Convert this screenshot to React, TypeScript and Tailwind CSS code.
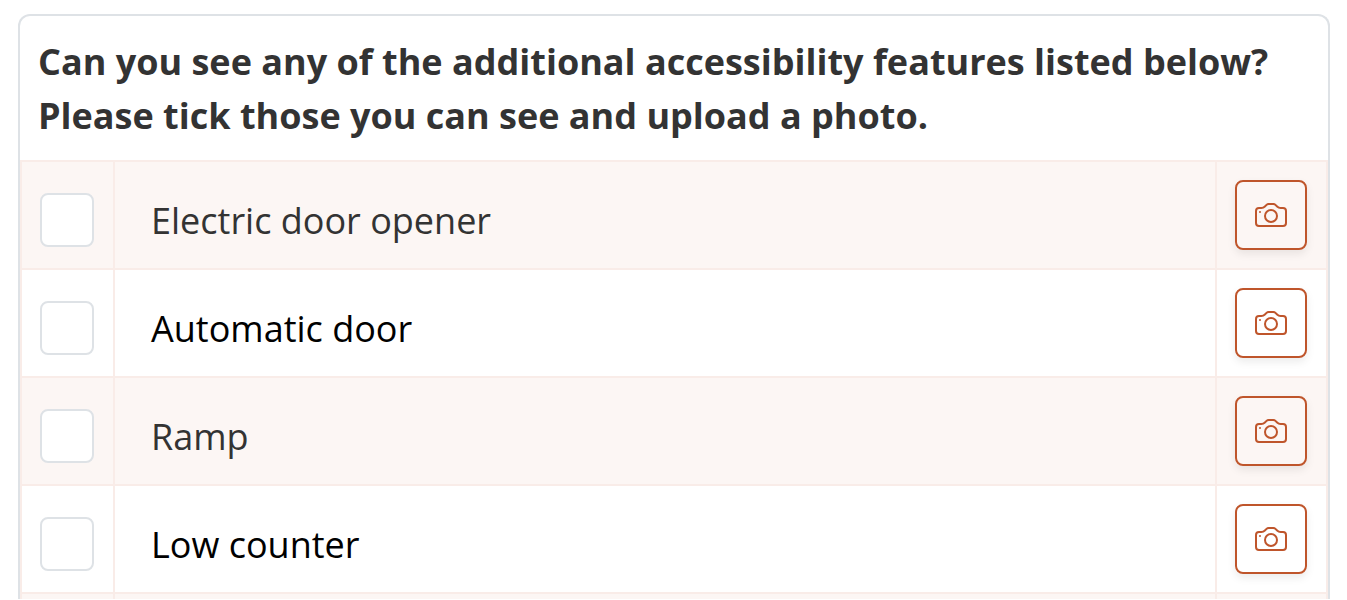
import { BsCamera } from "react-icons/bs";

const features = [
  { id: "electric-door-opener", label: "Electric door opener" },
  { id: "automatic-door", label: "Automatic door" },
  { id: "ramp", label: "Ramp" },
  { id: "low-counter", label: "Low counter" },
];

function FeatureRow({ id, label }: { id: string; label: string }) {
  return (
    <tr className="text-black odd:bg-[#fcf6f4] odd:text-[#333333]">
      <td className="w-[93px] border-2 border-[#f9ece8] px-[18px] pt-[31px] pb-5 align-top">
        <input
          id={id}
          type="checkbox"
          className="block size-[54px] appearance-none rounded-lg border-2 border-[#dee2e6] bg-white checked:bg-[#bf552b]"
        />
      </td>
      <td className="border-2 border-[#f9ece8] px-9 pt-8 pb-5 align-top">
        <label htmlFor={id} className="block">
          {label}
        </label>
      </td>
      <td className="w-[111px] border-2 border-[#f9ece8] px-[18px] py-[18px] align-top">
        <button
          type="button"
          aria-label={`Upload a photo: ${label}`}
          className="flex h-[70px] w-[72px] items-center justify-center rounded-lg border-2 border-[#bf552b] text-[#bf552b] shadow-[0_4px_9px_rgba(0,0,0,0.08)]"
        >
          <BsCamera className="size-8" />
        </button>
      </td>
    </tr>
  );
}

export default function App() {
  return (
    <main className="h-screen overflow-hidden bg-white pt-3.5 pr-[17px] pb-px pl-[18px] font-['Open_Sans','Noto_Sans',sans-serif] text-[36px] leading-[54px]">
      <section className="h-full overflow-hidden rounded-t-xl border-x-2 border-t-2 border-[#dee2e6]">
        <h1 className="px-[18px] pt-[19px] pb-[17px] font-bold text-[#333333]">
          Can you see any of the additional accessibility features listed below? Please tick those you can see and
          upload a photo.
        </h1>
        <table className="w-full border-collapse">
          <tbody>
            {features.map((feature) => (
              <FeatureRow key={feature.id} {...feature} />
            ))}
            <tr className="h-[108px] bg-[#fcf6f4]">
              <td className="border-2 border-[#f9ece8]" />
              <td className="border-2 border-[#f9ece8]" />
              <td className="border-2 border-[#f9ece8]" />
            </tr>
          </tbody>
        </table>
      </section>
    </main>
  );
}
